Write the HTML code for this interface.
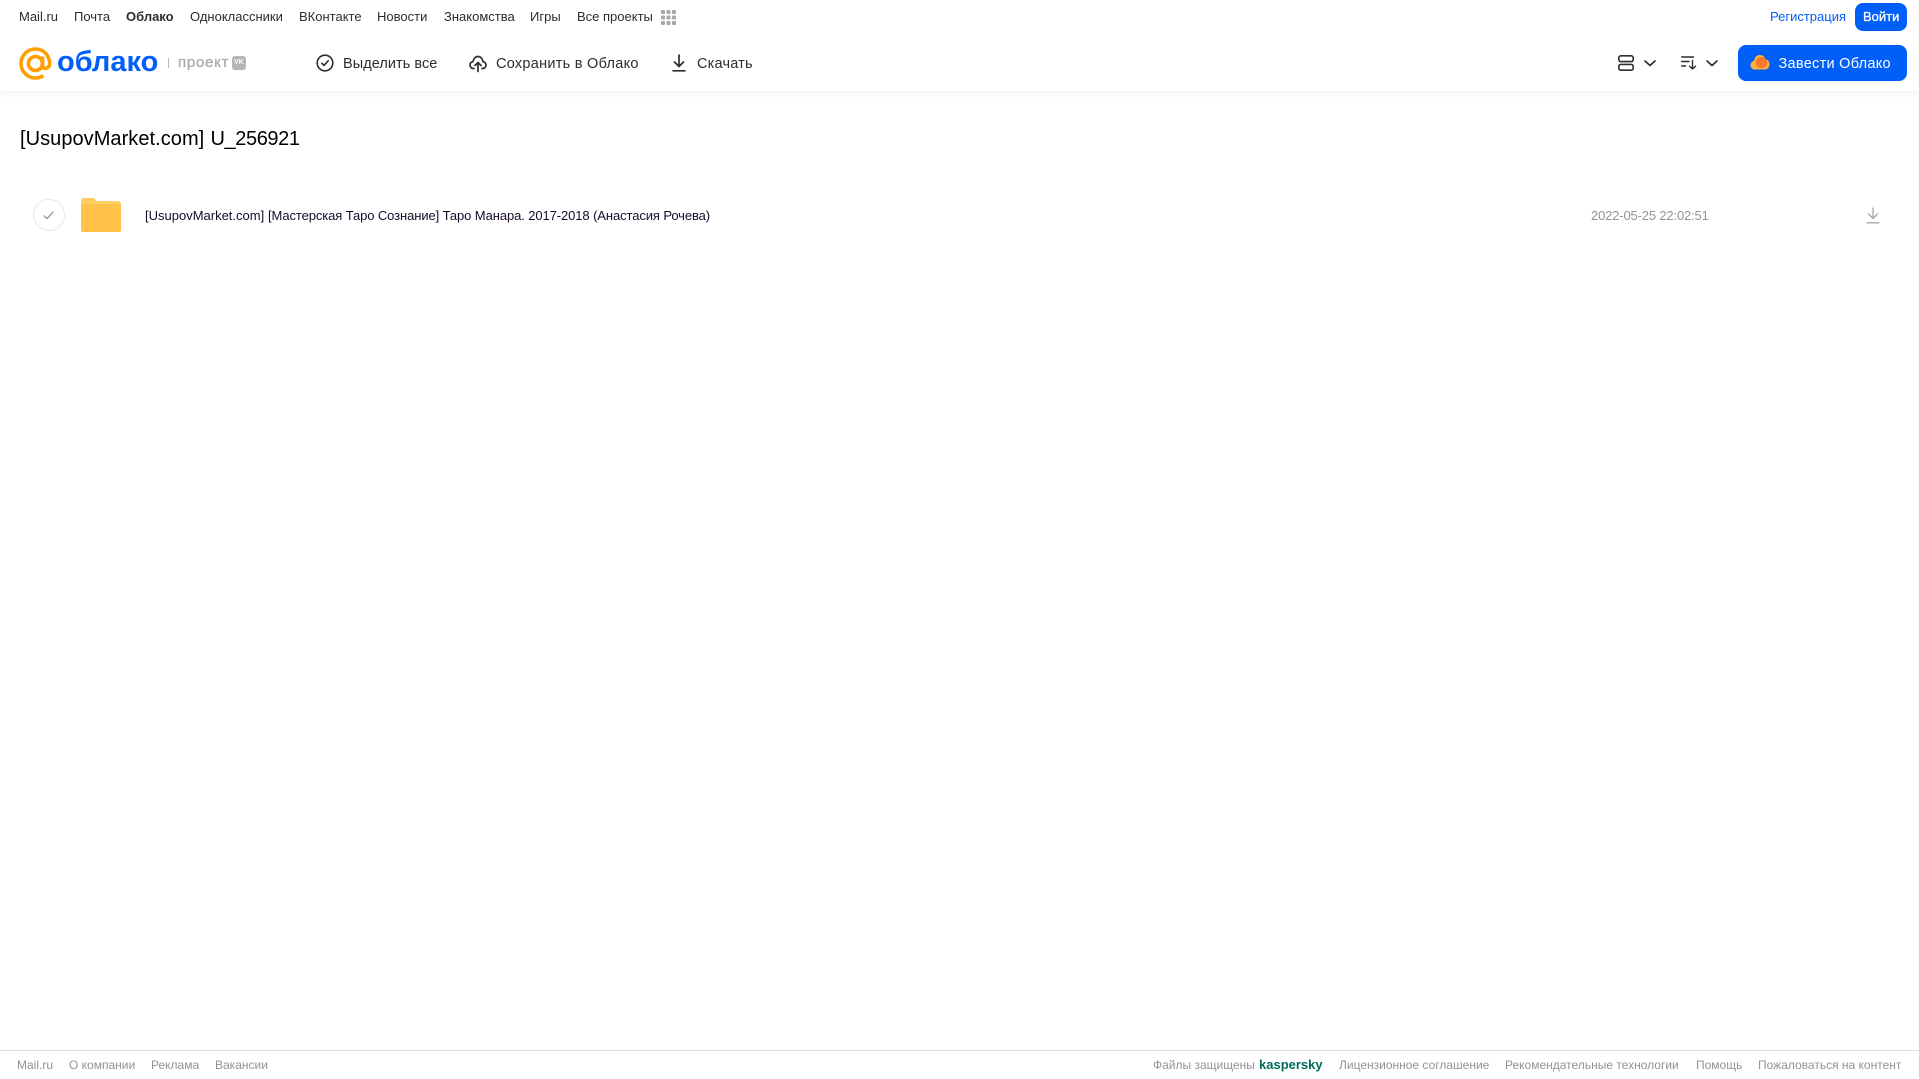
<!DOCTYPE html>
<html lang="ru">
<head>
<meta charset="utf-8">
<title>Облако</title>
<style>
html,body{margin:0;padding:0;width:1919px;height:1079px;overflow:hidden;background:#fff;}
body{font-family:"Liberation Sans",Arial,sans-serif;position:relative;}
.t{position:absolute;white-space:nowrap;line-height:18px;}
.n{top:8px;font-size:13px;color:#2c2d2e;}
.b{top:55px;font-size:14.5px;color:#2c2d2e;}
.f{top:1056px;font-size:12px;color:#919399;}
svg{position:absolute;overflow:visible;}
#hdr{position:absolute;left:0;top:0;width:1919px;height:91px;background:#fff;box-shadow:0 1px 8px rgba(0,0,0,.08);}
</style>
</head>
<body>
<div id="hdr"></div>

<span class="t n" style="left:19px">Mail.ru</span>
<span class="t n" style="left:74px">Почта</span>
<span class="t n" style="left:126px;font-weight:bold">Облако</span>
<span class="t n" style="left:190px">Одноклассники</span>
<span class="t n" style="left:299px">ВКонтакте</span>
<span class="t n" style="left:377px">Новости</span>
<span class="t n" style="left:444px">Знакомства</span>
<span class="t n" style="left:530px">Игры</span>
<span class="t n" style="left:577px">Все проекты</span>
<svg style="left:661px;top:10px" width="15" height="15" fill="#a5a7ab">
<rect x="0" y="0" width="4" height="4" rx="1"/><rect x="5.5" y="0" width="4" height="4" rx="1"/><rect x="11" y="0" width="4" height="4" rx="1"/>
<rect x="0" y="5.5" width="4" height="4" rx="1"/><rect x="5.5" y="5.5" width="4" height="4" rx="1"/><rect x="11" y="5.5" width="4" height="4" rx="1"/>
<rect x="0" y="11" width="4" height="4" rx="1"/><rect x="5.5" y="11" width="4" height="4" rx="1"/><rect x="11" y="11" width="4" height="4" rx="1"/>
</svg>
<span class="t n" style="left:1770px;color:#005ff9">Регистрация</span>
<div style="position:absolute;left:1855px;top:3px;width:52px;height:28px;background:#005ff9;border-radius:8px"></div>
<span class="t n" style="left:1863px;color:#fff;font-size:13px;-webkit-text-stroke:.3px #fff">Войти</span>

<!-- logo -->
<svg style="left:19px;top:47px" width="33" height="33" viewBox="0 0 33 33" fill="none" stroke="#ff9e00" stroke-width="3.6">
<circle cx="16.5" cy="16.5" r="7"/>
<path d="M23.5 9.5V18.5C23.5 22.5 30.6 22.5 30.6 16.5C30.6 8.5 24.5 2 16.5 2C8.5 2 2 8.5 2 16.5C2 24.5 8.5 31 16.5 31C19.5 31 22 30.2 24.3 28.6"/>
</svg>
<span class="t" style="left:57px;top:44px;font-size:29px;line-height:36px;font-weight:bold;color:#005ff9" id="logo">облако</span>
<div style="position:absolute;left:168px;top:58px;width:1px;height:10px;background:#b8babd"></div>
<span class="t" style="left:178px;top:54px;font-size:15px;letter-spacing:.75px;color:#a9abaf;-webkit-text-stroke:.35px #a9abaf">проект</span>
<div style="position:absolute;left:232px;top:56px;width:14px;height:14px;border-radius:3px;background:#b4b6ba;color:#fff;font-size:7px;font-weight:bold;line-height:14px;text-align:center">VK</div>

<!-- toolbar -->
<svg style="left:316px;top:54px" width="18" height="18" viewBox="0 0 18 18" fill="none" stroke="#2c2d2e" stroke-width="1.6" stroke-linecap="round" stroke-linejoin="round">
<circle cx="9" cy="9" r="7.8"/><path d="M5.8 9.2L8 11.4L12.2 6.8"/>
</svg>
<span class="t b" style="left:343px;letter-spacing:.05px">Выделить все</span>
<svg style="left:469px;top:54px" width="18" height="18" viewBox="0 0 18 18" fill="none" stroke="#2c2d2e" stroke-width="1.7" stroke-linecap="round" stroke-linejoin="round">
<path d="M5 14.5H4.5C2.5 14.5 1 13 1 11C1 9.2 2.3 7.8 4 7.6C4.4 4.6 6.5 2.5 9 2.5C11.5 2.5 13.6 4.6 14 7.6C15.7 7.8 17 9.2 17 11C17 13 15.5 14.5 13.5 14.5H13"/>
<path d="M9 17.5V9M6 11.5L9 8.5L12 11.5"/>
</svg>
<span class="t b" style="left:496px;letter-spacing:.27px">Сохранить в Облако</span>
<svg style="left:672px;top:54px" width="14" height="18" viewBox="0 0 14 18" fill="none" stroke="#2c2d2e" stroke-width="1.7" stroke-linecap="round" stroke-linejoin="round">
<path d="M7 1V12.5M2.5 8L7 12.5L11.5 8M1 16.8H13"/>
</svg>
<span class="t b" style="left:697px;letter-spacing:.2px">Скачать</span>

<!-- right tools -->
<svg style="left:1618px;top:55px" width="16" height="16" viewBox="0 0 16 16" fill="none" stroke="#2c2d2e" stroke-width="1.6">
<rect x=".8" y=".8" width="14.4" height="5.8" rx="2"/><rect x=".8" y="9.4" width="14.4" height="5.8" rx="2"/>
</svg>
<svg style="left:1644px;top:60px" width="12" height="7" viewBox="0 0 12 7" fill="none" stroke="#2c2d2e" stroke-width="1.7" stroke-linecap="round" stroke-linejoin="round"><path d="M1 1L6 5.5L11 1"/></svg>
<svg style="left:1681px;top:56px" width="16" height="14" viewBox="0 0 16 14" fill="none" stroke="#2c2d2e" stroke-width="1.4" stroke-linecap="round" stroke-linejoin="round">
<path d="M.7 1H12.5M.7 5.5H8M.7 10H4.5M11.5 4.5V13M8.6 10.2L11.5 13L14.6 10.2"/>
</svg>
<svg style="left:1706px;top:60px" width="12" height="7" viewBox="0 0 12 7" fill="none" stroke="#2c2d2e" stroke-width="1.7" stroke-linecap="round" stroke-linejoin="round"><path d="M1 1L6 5.5L11 1"/></svg>

<div style="position:absolute;left:1738px;top:45px;width:169px;height:36px;background:#005ff9;border-radius:8px"></div>
<svg style="left:1750px;top:54px" width="20" height="16" viewBox="0 0 20 16">
<path d="M5 15.5C2.2 15.5.5 13.6.5 11.2C.5 9 2 7.3 4 7C4.6 3.4 6.8 1 9.8 1C12.6 1 14.6 2.7 15.4 5.2C17.8 5.6 19.5 7.5 19.5 10.2C19.5 13.4 17.4 15.5 14.6 15.5Z" fill="#ffb03a"/>
<circle cx="11.5" cy="8.7" r="5.6" fill="#f5762c"/>
</svg>
<span class="t b" style="left:1778.5px;color:#fff;letter-spacing:.28px">Завести Облако</span>

<!-- title -->
<span class="t" style="left:20px;top:126px;font-size:20px;line-height:26px;color:#000;letter-spacing:.05px">[UsupovMarket.com]</span>
<span class="t" style="left:210.5px;top:126px;font-size:20px;line-height:26px;color:#000;letter-spacing:-.4px">U_256921</span>

<!-- row -->
<div style="position:absolute;left:33px;top:199px;width:30px;height:30px;border:1px solid #e7e8ea;border-radius:50%"></div>
<svg style="left:43px;top:211px" width="11" height="9" viewBox="0 0 11 9" fill="none" stroke="#919399" stroke-width="1.3" stroke-linecap="round" stroke-linejoin="round"><path d="M1 4.8L4 7.6L10 1.2"/></svg>
<svg style="left:81px;top:198px" width="40" height="34" viewBox="0 0 40 34">
<path d="M0 3C0 1.3 1.3 0 3 0H11.5C13 0 14 .7 14.8 2L16.2 4H0Z" fill="#ffc95c"/>
<path d="M0 3H37C38.7 3 40 4.3 40 6V31C40 32.7 38.7 34 37 34H3C1.3 34 0 32.7 0 31Z" fill="#ffd165"/>
<rect x="0" y="6" width="40" height="28" rx="2" fill="#ffc147"/>
</svg>
<span class="t" style="left:145px;top:207px;font-size:13px;color:#1a0a2a">[UsupovMarket.com]</span>
<span class="t" style="left:268px;top:207px;font-size:13px;color:#1a0a2a;letter-spacing:-.1px">[Мастерская Таро Сознание] Таро Манара. 2017-2018 (Анастасия Рочева)</span>
<span class="t" style="left:1591px;top:207px;font-size:13px;color:#919399;letter-spacing:-.16px">2022-05-25 22:02:51</span>
<svg style="left:1866px;top:207px" width="14" height="17" viewBox="0 0 14 17" fill="none" stroke="#a5a7ab" stroke-width="1.3" stroke-linecap="round" stroke-linejoin="round">
<path d="M7 1V11.5M2.5 7L7 11.5L11.5 7M1 15.8H13"/>
</svg>

<!-- footer -->
<div style="position:absolute;left:0;top:1050px;width:1919px;height:1px;background:#dcdde0"></div>
<span class="t f" style="left:17px">Mail.ru</span>
<span class="t f" style="left:69px">О компании</span>
<span class="t f" style="left:151px">Реклама</span>
<span class="t f" style="left:215px">Вакансии</span>
<span class="t f" style="left:1153px">Файлы защищены</span>
<span class="t f" style="left:1259px;color:#006d5c;font-weight:bold;font-size:13px">kaspersky</span>
<span class="t f" style="left:1339px">Лицензионное соглашение</span>
<span class="t f" style="left:1505px">Рекомендательные технологии</span>
<span class="t f" style="left:1696px">Помощь</span>
<span class="t f" style="left:1758px">Пожаловаться на контент</span>
</body>
</html>
